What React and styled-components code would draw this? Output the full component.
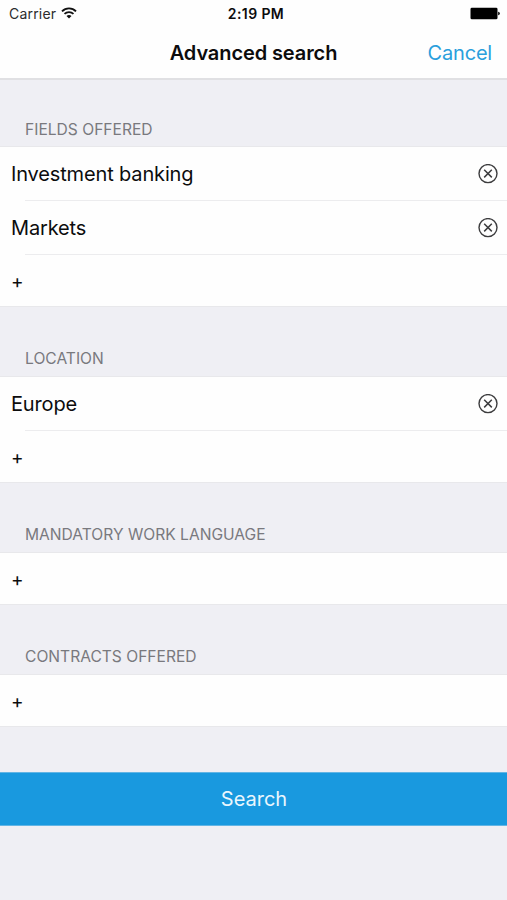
import React from "react";
import styled, { createGlobalStyle } from "styled-components";

const COLORS = {
  background: "#efeff4",
  white: "#fefefe",
  black: "#0c0c0d",
  label: "#79797e",
  line: "#e8e8eb",
  blue: "#1999df",
  link: "#2a9fdc",
};

const SECTIONS = [
  { title: "FIELDS OFFERED", items: ["Investment banking", "Markets"] },
  { title: "LOCATION", items: ["Europe"] },
  { title: "MANDATORY WORK LANGUAGE", items: [] },
  { title: "CONTRACTS OFFERED", items: [] },
];

const WifiIcon = () => (
  <svg width="16" height="12" viewBox="0 0 16 12" fill="none">
    <path d="M1 4.3C4.9 0.4 11.1 0.4 15 4.3" stroke="#111" strokeWidth="1.9" />
    <path d="M3.5 6.9C6 4.5 10 4.5 12.5 6.9" stroke="#111" strokeWidth="1.8" />
    <path d="M5.5 8.9C6.9 7.6 9.1 7.6 10.5 8.9L8 11.5Z" fill="#111" />
  </svg>
);

const BatteryIcon = () => (
  <svg width="30" height="13" viewBox="0 0 30 13">
    <rect x="0.5" y="0.7" width="27" height="11.6" rx="1.4" fill="#000" />
    <path d="M28.2 4.7C30.4 5.1 30.4 7.9 28.2 8.3Z" fill="#000" />
  </svg>
);

const RemoveIcon = () => (
  <svg width="20" height="20" viewBox="0 0 20 20" fill="none" stroke="#3c3c3e">
    <circle cx="10" cy="9.6" r="9" strokeWidth="1.4" />
    <path d="M6.2 5.8L13.8 13.4M13.8 5.8L6.2 13.4" strokeWidth="1.5" />
  </svg>
);

const Section = ({ title, items }) => (
  <section>
    <SectionTitle>{title}</SectionTitle>
    <List>
      {items.map((item) => (
        <Row key={item}>
          <ItemName>{item}</ItemName>
          <IconButton aria-label={`Remove ${item}`}>
            <RemoveIcon />
          </IconButton>
        </Row>
      ))}
      <AddRow>+</AddRow>
    </List>
  </section>
);

const App = () => {
  return (
    <Wrapper>
      <GlobalStyles />
      <StatusBar>
        <Carrier>
          Carrier
          <WifiIcon />
        </Carrier>
        <Time>2:19 PM</Time>
        <Battery>
          <BatteryIcon />
        </Battery>
      </StatusBar>
      <Header>
        <Title>Advanced search</Title>
        <CancelButton>Cancel</CancelButton>
      </Header>
      <main>
        {SECTIONS.map((section) => (
          <Section key={section.title} {...section} />
        ))}
        <SearchButton>Search</SearchButton>
      </main>
    </Wrapper>
  );
};

const GlobalStyles = createGlobalStyle`
  * {
    box-sizing: border-box;
  }

  body {
    margin: 0;
    background: ${COLORS.background};
  }

  button {
    border: 0;
    padding: 0;
    background: none;
    font: inherit;
    cursor: pointer;
  }

  svg {
    display: block;
  }
`;

const Wrapper = styled.div`
  min-height: 900px;
  background: ${COLORS.background};
  color: ${COLORS.black};
  font-family: Inter, "Liberation Sans", sans-serif;
`;

const StatusBar = styled.div`
  display: grid;
  grid-template-columns: 1fr auto 1fr;
  align-items: center;
  height: 27px;
  padding: 0 7px 0 9px;
  background: ${COLORS.white};
`;

const Carrier = styled.div`
  display: flex;
  align-items: center;
  gap: 5px;
  font-size: 14px;
  letter-spacing: 0.2px;
  color: #2c2c2e;

  svg {
    margin-top: -1px;
  }
`;

const Time = styled.div`
  padding-left: 3px;
  font-size: 14px;
  font-weight: 600;
  letter-spacing: 0.4px;
`;

const Battery = styled.div`
  display: flex;
  justify-content: flex-end;
`;

const Header = styled.header`
  display: grid;
  grid-template-columns: 1fr auto 1fr;
  align-items: center;
  height: 53px;
  padding: 0 15px;
  background: ${COLORS.white};
  border-bottom: 2px solid #e0e0e3;
`;

const Title = styled.h1`
  grid-column: 2;
  margin: 0;
  font-size: 20px;
  font-weight: 600;
  letter-spacing: -0.1px;
`;

const CancelButton = styled.button`
  justify-self: end;
  && {
    font-size: 20px;
    letter-spacing: -0.2px;
    color: ${COLORS.link};
  }
`;

const SectionTitle = styled.h2`
  display: flex;
  align-items: flex-end;
  height: 70px;
  margin: 0;
  padding: 0 25px 7px;
  border-bottom: 1px solid ${COLORS.line};
  color: ${COLORS.label};
  font-size: 15.6px;
  font-weight: 400;
  line-height: 20px;

  section:first-child > & {
    height: 67px;
    padding-bottom: 6px;
  }
`;

const List = styled.div`
  background: ${COLORS.white};
  border-bottom: 1px solid ${COLORS.line};
`;

const Row = styled.div`
  display: flex;
  align-items: center;
  justify-content: space-between;
  height: 54px;
  padding: 0 9px 1px 11px;
  background: linear-gradient(#ececee, #ececee) 25px 100% / 100% 1px no-repeat;
`;

const ItemName = styled.span`
  font-size: 20px;
  letter-spacing: -0.15px;
`;

const IconButton = styled.button`
  width: 20px;
  height: 20px;
`;

const AddRow = styled.button`
  && {
    display: flex;
    align-items: center;
    width: 100%;
    height: 51px;
    padding: 2px 11px 0;
    color: ${COLORS.black};
    font-size: 19px;
  }
`;

const SearchButton = styled.button`
  && {
    display: block;
    width: 100%;
    height: 54px;
    margin-top: 45px;
    padding-left: 1px;
    border-top: 1px solid #62b5e5;
    border-bottom: 1px solid #62b5e5;
    background: ${COLORS.blue};
    color: #eaf6fd;
    font-size: 20px;
  }
`;

export default App;
